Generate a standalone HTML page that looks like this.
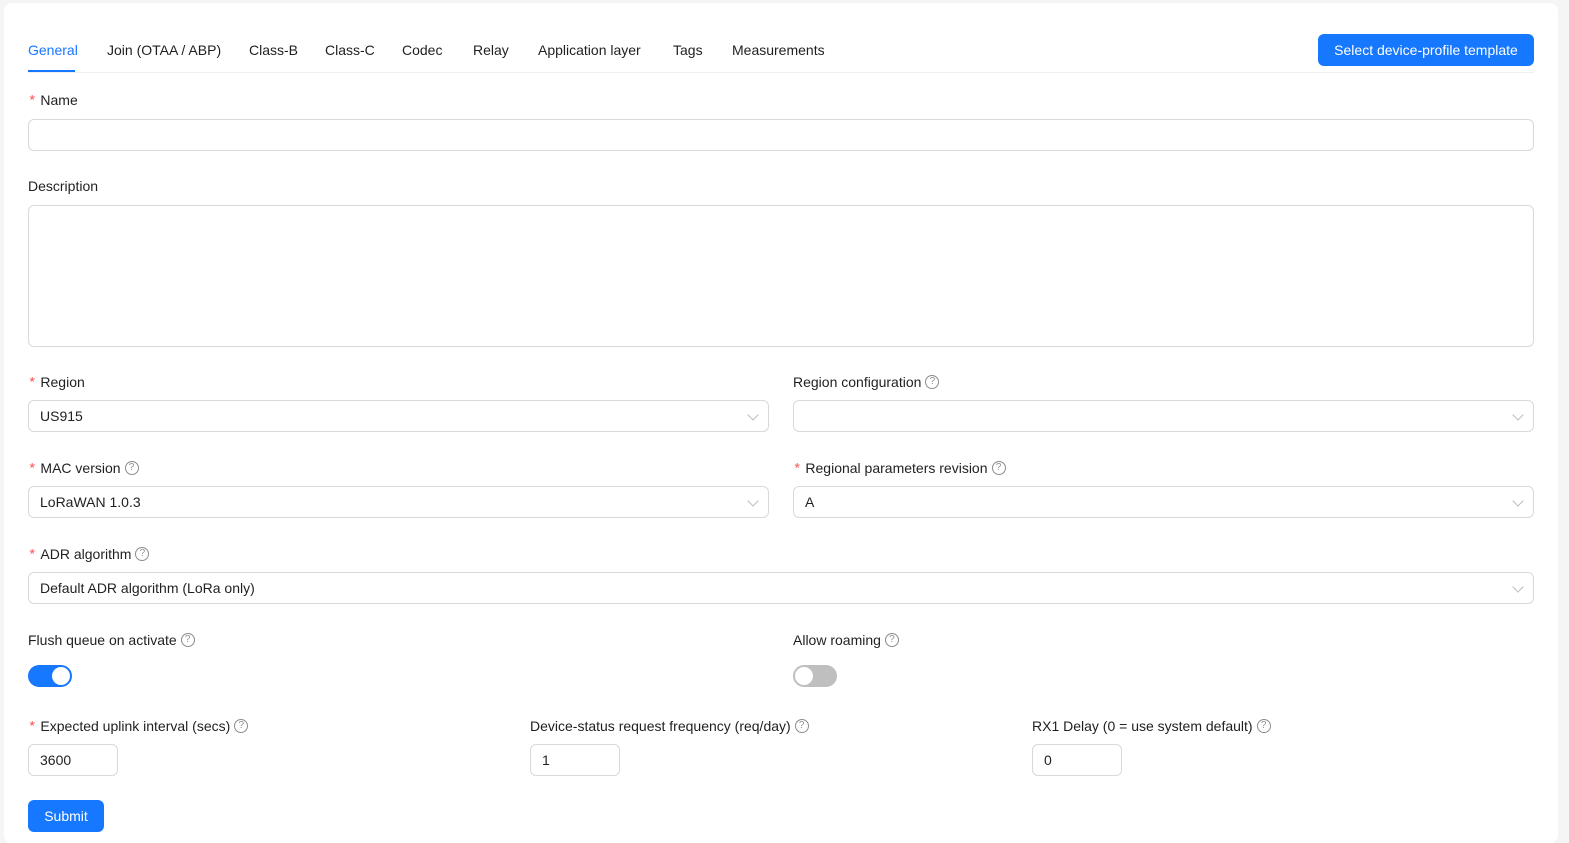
<!DOCTYPE html>
<html><head><meta charset="utf-8"><style>
*{box-sizing:border-box;margin:0;padding:0}
body{width:1569px;height:834px;background:#f5f5f5;font-family:"Liberation Sans",sans-serif;font-size:14px;color:rgba(0,0,0,.88);position:relative;overflow:hidden}
.card{position:absolute;left:4px;top:3px;width:1554px;height:840px;background:#fff;border-radius:8px}
.a{position:absolute;white-space:nowrap}
.t{position:absolute;top:41px;line-height:18px}
.lbl{position:absolute;line-height:18px;white-space:nowrap}
.req{color:#ff4d4f;margin-right:4px;font-family:"Liberation Mono",monospace}
.inp{position:absolute;border:1px solid #d9d9d9;border-radius:6px;background:#fff;padding-left:11px;line-height:30px}
.q{display:inline-block;position:relative;top:2px;width:14px;height:14px;border:1px solid rgba(0,0,0,.45);border-radius:50%;font-size:10px;line-height:12px;text-align:center;color:rgba(0,0,0,.45);margin-left:4px;vertical-align:top}
.arr{position:absolute;right:11px;top:10px;width:8px;height:8px;border-right:1px solid #bbb;border-bottom:1px solid #bbb;transform:rotate(45deg)}
.btn{position:absolute;background:#1677ff;color:#fff;border-radius:6px;text-align:center;line-height:32px;height:32px}
</style></head><body>
<div class="card"></div>
<div class="t" style="left:28px;color:#1677ff">General</div>
<div class="t" style="left:107px">Join (OTAA / ABP)</div>
<div class="t" style="left:249px">Class-B</div>
<div class="t" style="left:325px">Class-C</div>
<div class="t" style="left:402px">Codec</div>
<div class="t" style="left:473px">Relay</div>
<div class="t" style="left:538px">Application layer</div>
<div class="t" style="left:673px">Tags</div>
<div class="t" style="left:732px">Measurements</div>
<div class="a" style="left:28px;top:72px;width:1506px;height:1px;background:#f0f0f0"></div>
<div class="a" style="left:28px;top:70px;width:47px;height:2px;background:#1677ff"></div>
<div class="btn" style="left:1318px;top:34px;width:216px">Select device-profile template</div>

<div class="lbl" style="left:28px;top:91px"><span class="req">*</span>Name</div>
<div class="inp" style="left:28px;top:119px;width:1506px;height:32px"></div>
<div class="lbl" style="left:28px;top:177px">Description</div>
<div class="inp" style="left:28px;top:205px;width:1506px;height:142px"></div>

<div class="lbl" style="left:28px;top:373px"><span class="req">*</span>Region</div>
<div class="inp" style="left:28px;top:400px;width:741px;height:32px">US915<span class="arr"></span></div>
<div class="lbl" style="left:793px;top:373px">Region configuration<span class="q">?</span></div>
<div class="inp" style="left:793px;top:400px;width:741px;height:32px"><span class="arr"></span></div>

<div class="lbl" style="left:28px;top:459px"><span class="req">*</span>MAC version<span class="q">?</span></div>
<div class="inp" style="left:28px;top:486px;width:741px;height:32px">LoRaWAN 1.0.3<span class="arr"></span></div>
<div class="lbl" style="left:793px;top:459px"><span class="req">*</span>Regional parameters revision<span class="q">?</span></div>
<div class="inp" style="left:793px;top:486px;width:741px;height:32px">A<span class="arr"></span></div>

<div class="lbl" style="left:28px;top:545px"><span class="req">*</span>ADR algorithm<span class="q">?</span></div>
<div class="inp" style="left:28px;top:572px;width:1506px;height:32px">Default ADR algorithm (LoRa only)<span class="arr"></span></div>

<div class="lbl" style="left:28px;top:631px">Flush queue on activate<span class="q">?</span></div>
<div class="a" style="left:28px;top:665px;width:44px;height:22px;border-radius:11px;background:#1677ff"><div class="a" style="left:24px;top:2px;width:18px;height:18px;border-radius:50%;background:#fff"></div></div>
<div class="lbl" style="left:793px;top:631px">Allow roaming<span class="q">?</span></div>
<div class="a" style="left:793px;top:665px;width:44px;height:22px;border-radius:11px;background:#bfbfbf"><div class="a" style="left:2px;top:2px;width:18px;height:18px;border-radius:50%;background:#fff"></div></div>

<div class="lbl" style="left:28px;top:717px"><span class="req">*</span>Expected uplink interval (secs)<span class="q">?</span></div>
<div class="inp" style="left:28px;top:744px;width:90px;height:32px">3600</div>
<div class="lbl" style="left:530px;top:717px">Device-status request frequency (req/day)<span class="q">?</span></div>
<div class="inp" style="left:530px;top:744px;width:90px;height:32px">1</div>
<div class="lbl" style="left:1032px;top:717px">RX1 Delay (0 = use system default)<span class="q">?</span></div>
<div class="inp" style="left:1032px;top:744px;width:90px;height:32px">0</div>

<div class="btn" style="left:28px;top:800px;width:76px">Submit</div>
</body></html>
